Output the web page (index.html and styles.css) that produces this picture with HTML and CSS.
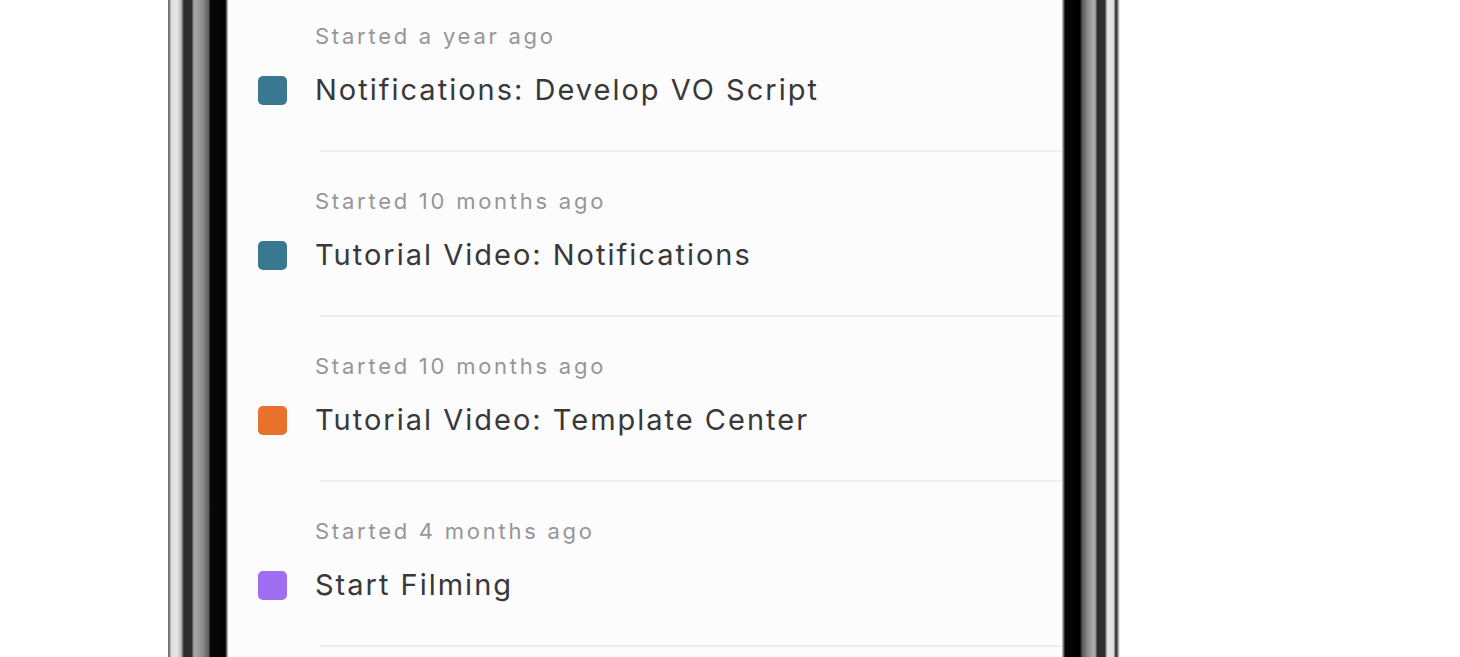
FILE: index.html
```html
<!DOCTYPE html>
<html lang="en">
<head>
<meta charset="utf-8">
<title>Tasks</title>
<link rel="stylesheet" href="styles.css">
</head>
<body>
<div class="phone">
  <div class="bezel bezel-left"></div>
  <div class="screen">
    <div class="list">
      <div class="item">
        <div class="meta">Started a year ago</div>
        <div class="title-row"><span class="dot teal"></span><span class="title">Notifications: Develop VO Script</span></div>
      </div>
      <div class="sep"></div>
      <div class="item">
        <div class="meta">Started 10 months ago</div>
        <div class="title-row"><span class="dot teal"></span><span class="title">Tutorial Video: Notifications</span></div>
      </div>
      <div class="sep"></div>
      <div class="item">
        <div class="meta">Started 10 months ago</div>
        <div class="title-row"><span class="dot orange"></span><span class="title">Tutorial Video: Template Center</span></div>
      </div>
      <div class="sep"></div>
      <div class="item">
        <div class="meta">Started 4 months ago</div>
        <div class="title-row"><span class="dot purple"></span><span class="title">Start Filming</span></div>
      </div>
      <div class="sep"></div>
    </div>
  </div>
  <div class="bezel bezel-right"></div>
</div>
</body>
</html>
```
FILE: styles.css
```css
html, body {
  margin: 0;
  padding: 0;
  height: 657px;
  overflow: hidden;
  background: #ffffff;
  font-family: Inter, "Liberation Sans", Arial, sans-serif;
}

.phone {
  display: flex;
  margin-left: 168px;
  width: 952px;
  height: 657px;
}

.bezel {
  flex: none;
  height: 100%;
}

.bezel-left {
  width: 60px;
  background: linear-gradient(to right,
    #6a6a6c 0px, #8a8a8c 2px, #dcdcdc 3px, #e6e6e6 9px, #bdbdbd 13px, #5a5a5e 15px,
    #2c2c30 16px, #2e2e32 24px, #8c8c8e 25px, #a9a9aa 27px, #8a8a8b 35px, #5c5c5e 41px,
    #0a0a0a 42px, #000000 57px, #777 59px, #e8e8e8 60px);
}

.bezel-right {
  width: 58px;
  background: linear-gradient(to right,
    #d0d0d0 0px, #555 2px, #050505 3px, #000000 18px, #555 20px, #8e8e90 26px,
    #b0b0b0 32px, #8a8a8c 34px, #2c2c30 35px, #2e2e32 43px, #9a9a9a 44px, #e8e8e8 46px,
    #dcdcdc 52px, #4a4a4c 53px, #3a3a3c 55px, #9a9a9a 56px, #ffffff 58px);
}

.screen {
  flex: 1;
  background: #fcfcfc;
  overflow: hidden;
  padding-left: 30px;
}

.list {
  display: flex;
  flex-direction: column;
  margin-top: -13px;
}

.item {
  display: flex;
  flex-direction: column;
  padding-top: 36px;
  padding-bottom: 43px;
}

.meta {
  margin-left: 57px;
  font-size: 22px;
  line-height: 26px;
  height: 26px;
  letter-spacing: 2.75px;
  color: #96969a;
  white-space: nowrap;
}

.title-row {
  display: flex;
  align-items: center;
  gap: 28px;
  margin-top: 24px;
  height: 34px;
}

.dot {
  flex: none;
  width: 29px;
  height: 29px;
  border-radius: 5px;
}

.teal { background: #3a7891; }
.orange { background: #e8722c; }
.purple { background: #9f6ef3; }

.title {
  font-size: 29px;
  line-height: 34px;
  letter-spacing: 2px;
  color: #38383b;
  white-space: nowrap;
}

.sep {
  height: 2px;
  margin-left: 62px;
  background: #eeeef0;
}
```
